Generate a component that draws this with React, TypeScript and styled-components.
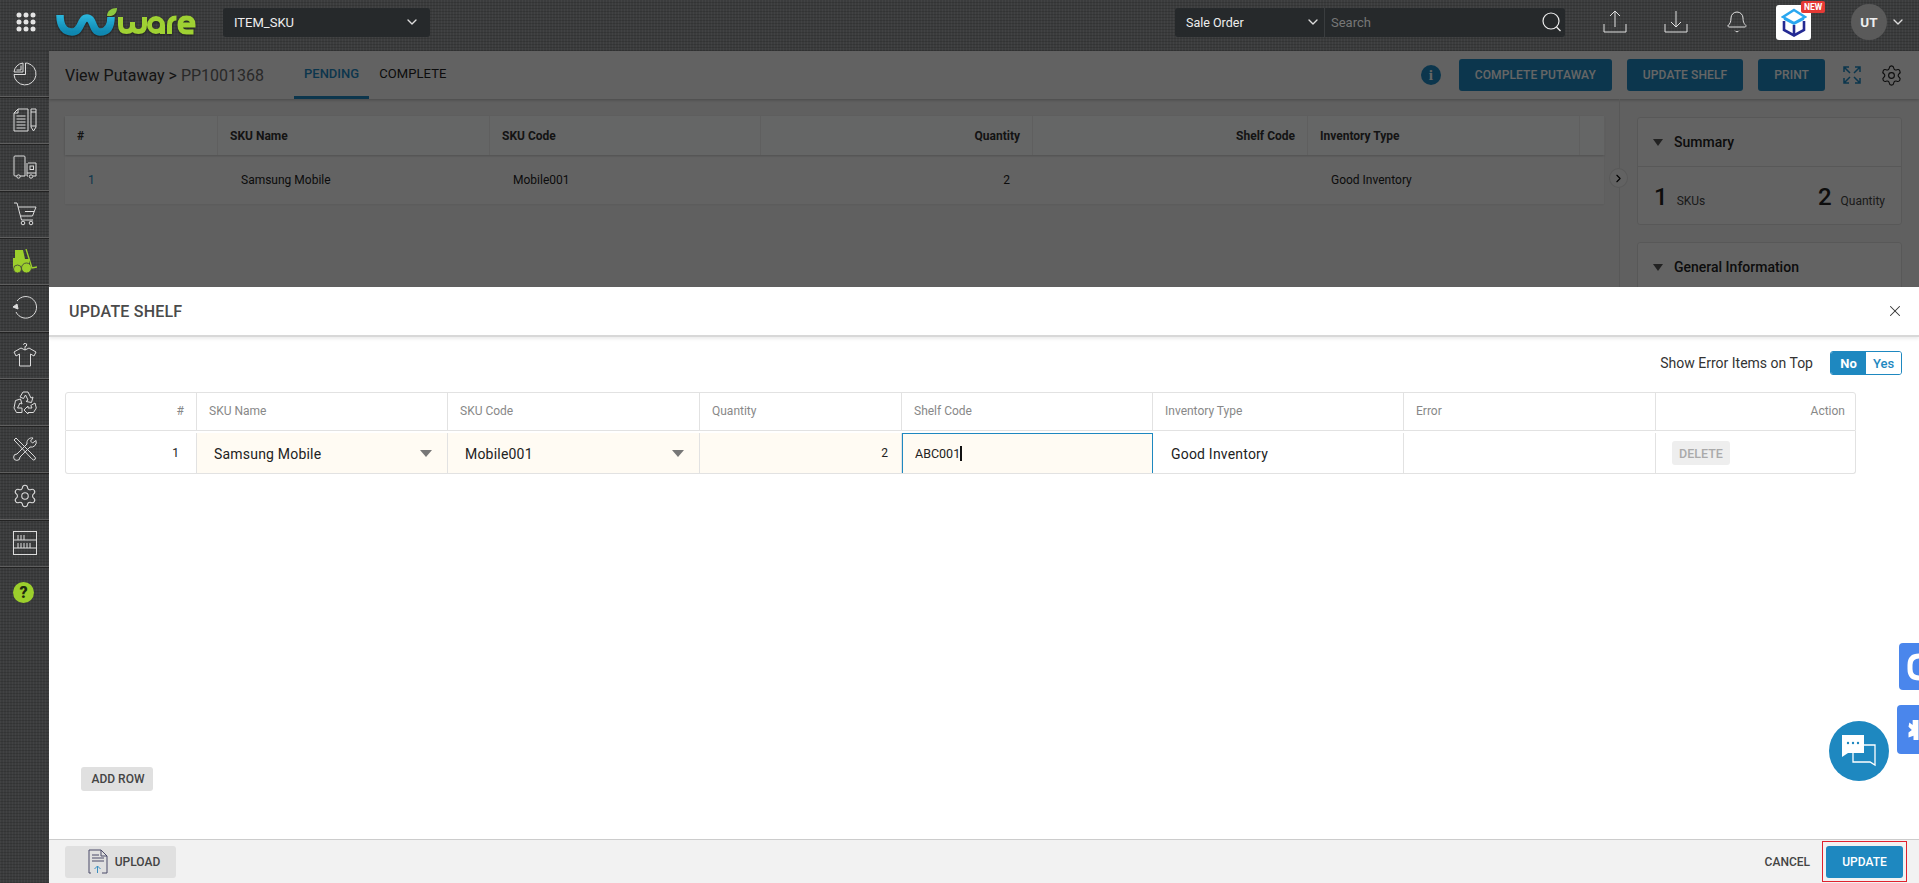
import { ChevronDown, ChevronRight, Bell, Settings, X } from 'lucide-react'
import styled, { createGlobalStyle } from 'styled-components'

const GlobalStyle = createGlobalStyle`
  html, body {
    margin: 0;
    height: 100%;
    overflow: hidden;
    font-family: 'Roboto', 'Liberation Sans', sans-serif;
    color: #222;
  }
  * { box-sizing: border-box; }
`

const fabric = `
  background-color: #3b3c3d;
  background-image:
    repeating-linear-gradient(0deg, rgba(0, 0, 0, 0.14) 0 1px, transparent 1px 3px),
    repeating-linear-gradient(90deg, rgba(255, 255, 255, 0.035) 0 1px, transparent 1px 3px);
`

const Logo = () => (
  <LogoSvg viewBox="0 0 140 28">
    <defs>
      <linearGradient id="logoBlue" x1="0" y1="0" x2="0" y2="1">
        <stop offset="0" stopColor="#2bb6dc" />
        <stop offset="1" stopColor="#0f87b0" />
      </linearGradient>
    </defs>
    <path
      d="M4 7 C4 19 9 24 16 24 C26 24 24 10 31 10 C38 10 36 24 44 24 C52 24 55 18 55 9"
      fill="none"
      stroke="url(#logoBlue)"
      strokeWidth="7.5"
      strokeLinecap="butt"
    />
    <path d="M51 8 C51 3 55 0 61 0 C61 5 58 9 51 8Z" fill="#8dc63f" />
    <g fill="none" stroke="#9fd133" strokeWidth="5" strokeLinecap="butt">
      <path d="M64.5 9 v8 q0 6.5 6 6.5 q6 0 6 -6.5 v-3 v3 q0 6.5 6 6.5 q6 0 6 -6.5 v-8" />
      <circle cx="100" cy="17" r="6.5" />
      <path d="M106.5 17 v9" />
      <path d="M113.5 26 v-9 q0 -7 7 -7" />
      <path d="M124.5 17 h12.5 q0 -7 -6.5 -7 q-6.5 0 -6.5 7 q0 7 6.5 7 h7" />
    </g>
  </LogoSvg>
)

const GridIcon = () => (
  <svg width="20" height="20" viewBox="0 0 20 20" fill="#e4e4e4">
    {[3, 10, 17].map((y) =>
      [3, 10, 17].map((x) => <circle key={`${x}-${y}`} cx={x} cy={y} r="2.5" />)
    )}
  </svg>
)

const PieIcon = () => (
  <NavSvg viewBox="0 0 24 24">
    <path d="M14.5 1.2 A11 11 0 1 1 1 12.5 H12.5 V1 Z" />
    <path d="M10 1 V10 H1 A10 10 0 0 1 10 1Z" />
    <path d="M8 3.5 V8 H3.5" />
  </NavSvg>
)
const DocIcon = () => (
  <NavSvg viewBox="0 0 24 24">
    <path d="M5 1 H15 V23 H1 V5 Z" />
    <path d="M5 1 V5 H1" />
    <path d="M3.5 8 H12.5 M3.5 11 H12.5 M3.5 14 H12.5 M3.5 17 H12.5 M3.5 20 H12.5" />
    <path d="M18 1 H23 V19 L20.5 23 L18 19 Z" />
    <path d="M18 4 H23 M18 18 H23" />
  </NavSvg>
)
const TruckIcon = () => (
  <NavSvg viewBox="0 0 24 24">
    <path d="M4 21 H2 Q1 21 1 20 V2 Q1 1 2 1 H11 Q12 1 12 2 V21 H7" />
    <path d="M15 8 H23 V21 H20 M15 21 H14 V8" />
    <rect x="17" y="11" width="3.5" height="3.5" />
    <path d="M14 18 H23" />
    <circle cx="5.5" cy="21.5" r="1.7" />
    <circle cx="18" cy="21.5" r="1.7" />
  </NavSvg>
)
const CartIcon = () => (
  <NavSvg viewBox="0 0 24 24">
    <path d="M1 1 H4 L8.5 18 H20" />
    <path d="M5 5 H23 L19.5 14 H7.5" />
    <path d="M12 9.5 H21" />
    <circle cx="10" cy="21" r="1.8" />
    <circle cx="18" cy="21" r="1.8" />
  </NavSvg>
)
const ForkliftIcon = () => (
  <svg width="24" height="25" viewBox="0 0 24 25">
    <path d="M2 1 H10 L12 10 H16 V20 H0 V9 H2 Z" fill="#9ccf2c" />
    <path d="M4 3 H8.5 L10 10 H4 Z" fill="#9ccf2c" />
    <circle cx="4.5" cy="20" r="4" fill="#9ccf2c" stroke="#3b3c3d" strokeWidth="0.8" />
    <circle cx="13.5" cy="19" r="5" fill="#9ccf2c" stroke="#3b3c3d" strokeWidth="0.8" />
    <path d="M13 0 L19 19 L24 18" fill="none" stroke="#9ccf2c" strokeWidth="1.3" />
  </svg>
)
const ReturnIcon = () => (
  <NavSvg viewBox="0 0 24 24">
    <path d="M4 5 A10.8 10.8 0 1 1 3 16" />
    <path d="M0 11 L4 8 L5 13 Z" fill="#dcdcdc" />
  </NavSvg>
)
const ShirtIcon = () => (
  <NavSvg viewBox="0 0 24 24">
    <path d="M8 5 L1 9 L3 13 L6.5 11 V23 H17.5 V11 L21 13 L23 9 L16 5 L12 7 Z" />
    <path d="M12 7 V3.5 A1.6 1.6 0 1 0 10.5 1.8" />
  </NavSvg>
)
const RecycleIcon = () => (
  <NavSvg viewBox="0 0 24 24">
    <path d="M7 7 L10 2 H15 L18 8 L20 7 L18.5 12.5 L13 11.5 L15 10 L12.5 5 L10.5 8.5 Z" />
    <path d="M2.5 10.5 L7.5 9 L9 14 L7 13 L4.5 18 H9 V22.5 H3.5 L1 18 Z" />
    <path d="M22 13 L23.3 18 L20.5 22.5 H15 V24 L11 20 L15 16 V18 H19 L17.8 15.5 Z" />
  </NavSvg>
)
const ToolsIcon = () => (
  <NavSvg viewBox="0 0 24 24">
    <path d="M1 3 L3 1 L5 3 L21 19 Q23.5 21 22 22.5 Q20.5 24 18.5 21.5 L3 5 Z" />
    <path d="M14 7 A5 5 0 0 1 20 1 L17.5 4 L19.5 6 L23 3.5 A5 5 0 0 1 17 10 L7 20 A3.2 3.2 0 1 1 4 17 Z" />
  </NavSvg>
)
const ShelfIcon = () => (
  <NavSvg viewBox="0 0 24 24">
    <rect x="0.5" y="0.5" width="23" height="23" />
    <path d="M0.5 9 H23.5 M0.5 17 H23.5" />
    <path d="M5 4 V9 M8 4 V9 M11 4 V9 M5 12 V17 M8 12 V17 M11 12 V17 M14 12 V17 M17 12 V17" />
  </NavSvg>
)

const UploadTrayIcon = () => (
  <TopSvg viewBox="0 0 24 24">
    <path d="M1 14 V22 H23 V14" />
    <path d="M12 1 V17 M7 6 L12 1 L17 6" />
  </TopSvg>
)
const DownloadTrayIcon = () => (
  <TopSvg viewBox="0 0 24 24">
    <path d="M1 14 V22 H23 V14" />
    <path d="M12 1 V17 M7 12 L12 17 L17 12" />
  </TopSvg>
)

const CubeIcon = () => (
  <svg width="26" height="29" viewBox="0 0 26 29">
    <path d="M13 2 L24 9 L13 15 L2 9 Z" fill="none" stroke="#2aa7f0" strokeWidth="2.4" />
    <path d="M3 13 V22 L13 27.5 L23 22 V13" fill="none" stroke="#242a93" strokeWidth="2.6" />
    <path d="M13 17 V27" stroke="#242a93" strokeWidth="2.6" />
    <path d="M3 11 L13 16 L23 11" fill="none" stroke="#2aa7f0" strokeWidth="1.6" />
  </svg>
)

const ExpandIcon = () => (
  <svg width="18" height="18" viewBox="0 0 18 18" fill="none" stroke="#1e88c0" strokeWidth="1.5">
    <path d="M1 6 V1 H6 M1 1 L7 7 M12 1 H17 V6 M17 1 L11 7 M1 12 V17 H6 M1 17 L7 11 M12 17 H17 V12 M17 17 L11 11" />
  </svg>
)

const UploadFileIcon = () => (
  <svg width="20" height="25" viewBox="0 0 20 25" fill="none" stroke="#4b4a68" strokeWidth="1">
    <path d="M3 24 H1 V1 H13 L19 7 V24 H14" />
    <path d="M13 1 V7 H19" />
    <path d="M4 6 H11 M4 9 H16 M4 12 H16" />
    <path d="M9.5 24 V17 M6.5 20 L9.5 17 L12.5 20" stroke="#3a8fc0" />
  </svg>
)

const ChatIcon = () => (
  <svg width="36" height="34" viewBox="0 0 36 34">
    <path d="M12 11 H34 V31 L29 28 H12 Z" fill="none" stroke="#fff" strokeWidth="1.3" />
    <path d="M1 1 H23 V19 H7 L1 23 Z" fill="#fff" />
    <circle cx="7" cy="9" r="1.2" fill="#1e88c0" />
    <circle cx="12" cy="9" r="1.2" fill="#1e88c0" />
    <circle cx="17" cy="9" r="1.2" fill="#1e88c0" />
  </svg>
)

const navItems = [
  <PieIcon key="pie" />,
  <DocIcon key="doc" />,
  <TruckIcon key="truck" />,
  <CartIcon key="cart" />,
  <ForkliftIcon key="forklift" />,
  <ReturnIcon key="return" />,
  <ShirtIcon key="shirt" />,
  <RecycleIcon key="recycle" />,
  <ToolsIcon key="tools" />,
  <Settings key="settings" size={26} strokeWidth={1} color="#dcdcdc" />,
  <ShelfIcon key="shelf" />
]

const pageColumns = '153px 272px 271px 272px 275px 272px 24px'
const modalColumns = '131px 251px 252px 202px 251px 251px 252px 201px'

function App() {
  return (
    <>
      <GlobalStyle />
      <Screen>
        <TopBar>
          <GridButton>
            <GridIcon />
          </GridButton>
          <Logo />
          <FacilitySelect>
            <span>ITEM_SKU</span>
            <ChevronDown size={16} strokeWidth={2} color="#ddd" />
          </FacilitySelect>
          <SearchGroup>
            <SearchType>
              <span>Sale Order</span>
              <ChevronDown size={16} strokeWidth={2} color="#ddd" />
            </SearchType>
            <SearchInput>
              <span>Search</span>
              <svg width="20" height="20" viewBox="0 0 20 20" fill="none" stroke="#eee" strokeWidth="1.2">
                <circle cx="9" cy="9" r="8" />
                <path d="M14.5 15 L18.5 19" />
              </svg>
            </SearchInput>
          </SearchGroup>
          <TopIcon>
            <UploadTrayIcon />
          </TopIcon>
          <TopIcon>
            <DownloadTrayIcon />
          </TopIcon>
          <BellSlot>
            <Bell size={24} strokeWidth={1} color="#e0e0e0" />
          </BellSlot>
          <AppTile>
            <CubeIcon />
            <NewBadge>NEW</NewBadge>
          </AppTile>
          <Avatar>UT</Avatar>
          <ChevronDown size={16} strokeWidth={2} color="#ddd" />
        </TopBar>
        <Body>
          <SideNav>
            {navItems.map((icon) => (
              <NavItem key={icon.key}>{icon}</NavItem>
            ))}
            <HelpItem>
              <HelpBadge>?</HelpBadge>
            </HelpItem>
          </SideNav>
          <Main>
            <PageHeader>
              <Breadcrumb>
                View Putaway &gt; <BreadcrumbId>PP1001368</BreadcrumbId>
              </Breadcrumb>
              <Tabs>
                <Tab $active>PENDING</Tab>
                <Tab>COMPLETE</Tab>
              </Tabs>
              <HeaderActions>
                <InfoDot>i</InfoDot>
                <PrimaryButton>COMPLETE PUTAWAY</PrimaryButton>
                <PrimaryButton>UPDATE SHELF</PrimaryButton>
                <PrimaryButton>PRINT</PrimaryButton>
                <ExpandSlot>
                  <ExpandIcon />
                </ExpandSlot>
                <Settings size={23} strokeWidth={1.2} color="#222" />
              </HeaderActions>
            </PageHeader>
            <PageBody>
              <PageTableArea>
                <PageTable>
                  <PageHeadRow>
                    <PageHeadCell>#</PageHeadCell>
                    <PageHeadCell>SKU Name</PageHeadCell>
                    <PageHeadCell>SKU Code</PageHeadCell>
                    <PageHeadCell $right>Quantity</PageHeadCell>
                    <PageHeadCell $right>Shelf Code</PageHeadCell>
                    <PageHeadCell>Inventory Type</PageHeadCell>
                    <PageHeadCell />
                  </PageHeadRow>
                  <PageRow>
                    <PageCell>
                      <RowLink>1</RowLink>
                    </PageCell>
                    <PageCell>Samsung Mobile</PageCell>
                    <PageCell>Mobile001</PageCell>
                    <PageCell $right>2</PageCell>
                    <PageCell $right />
                    <PageCell>Good Inventory</PageCell>
                    <PageCell />
                  </PageRow>
                </PageTable>
              </PageTableArea>
              <SideHandle>
                <ChevronRight size={13} strokeWidth={2} color="#000" />
              </SideHandle>
              <SidePanel>
                <SummaryCard>
                  <CardTitle>
                    <CardCaret />
                    Summary
                  </CardTitle>
                  <SummaryStats>
                    <Stat>
                      <StatValue>1</StatValue>
                      <StatLabel>SKUs</StatLabel>
                    </Stat>
                    <Stat>
                      <StatValue>2</StatValue>
                      <StatLabel>Quantity</StatLabel>
                    </Stat>
                  </SummaryStats>
                </SummaryCard>
                <InfoCard>
                  <CardTitle>
                    <CardCaret />
                    General Information
                  </CardTitle>
                </InfoCard>
              </SidePanel>
            </PageBody>
            <Backdrop />
            <Modal>
              <ModalHeader>
                <ModalTitle>UPDATE SHELF</ModalTitle>
                <X size={18} strokeWidth={1.4} color="#333" />
              </ModalHeader>
              <ModalBody>
                <ToggleRow>
                  <span>Show Error Items on Top</span>
                  <Toggle>
                    <ToggleOption $on>No</ToggleOption>
                    <ToggleOption>Yes</ToggleOption>
                  </Toggle>
                </ToggleRow>
                <EditTable>
                  <EditHead>
                    <EditHeadCell $right>#</EditHeadCell>
                    <EditHeadCell>SKU Name</EditHeadCell>
                    <EditHeadCell>SKU Code</EditHeadCell>
                    <EditHeadCell>Quantity</EditHeadCell>
                    <EditHeadCell>Shelf Code</EditHeadCell>
                    <EditHeadCell>Inventory Type</EditHeadCell>
                    <EditHeadCell>Error</EditHeadCell>
                    <EditHeadCell $right>Action</EditHeadCell>
                  </EditHead>
                  <EditRow>
                    <IndexCell>1</IndexCell>
                    <SelectCell>
                      Samsung Mobile
                      <SelectCaret />
                    </SelectCell>
                    <SelectCell>
                      Mobile001
                      <SelectCaret />
                    </SelectCell>
                    <QuantityCell>2</QuantityCell>
                    <ShelfInput>
                      ABC001
                      <TextCaret />
                    </ShelfInput>
                    <PlainCell>Good Inventory</PlainCell>
                    <PlainCell />
                    <ActionCell>
                      <DeleteButton>DELETE</DeleteButton>
                    </ActionCell>
                  </EditRow>
                </EditTable>
                <AddRowButton>ADD ROW</AddRowButton>
              </ModalBody>
              <ModalFooter>
                <UploadButton>
                  <UploadFileIcon />
                  UPLOAD
                </UploadButton>
                <FooterActions>
                  <CancelButton>CANCEL</CancelButton>
                  <Highlight>
                    <UpdateButton>UPDATE</UpdateButton>
                  </Highlight>
                </FooterActions>
              </ModalFooter>
            </Modal>
          </Main>
        </Body>
        <FloatTab $top={643} $height={47}>
          <svg width="12" height="30" viewBox="0 0 12 30">
            <path d="M12 4 Q3 4 3 13 V17 Q3 26 12 26" fill="none" stroke="#fff" strokeWidth="5" />
          </svg>
        </FloatTab>
        <FloatTab $top={705} $height={49} $wide>
          <svg width="11" height="20" viewBox="0 0 12 24" fill="#fff">
            <path d="M5 0 H12 V24 H6 V19 L0 21 L0 15 L4 12 L0 8 L1 3 L5 6 Z" />
          </svg>
        </FloatTab>
        <ChatBubble>
          <ChatIcon />
        </ChatBubble>
      </Screen>
    </>
  )
}

const Screen = styled.div`
  position: relative;
  height: 883px;
  overflow: hidden;
  display: flex;
  flex-direction: column;
`

const TopBar = styled.header`
  ${fabric}
  flex: 0 0 51px;
  display: flex;
  align-items: center;
  padding: 0 13px 7px 16px;
  color: #eee;
`

const GridButton = styled.div`
  display: flex;
  margin-right: 20px;
`

const LogoSvg = styled.svg`
  width: 140px;
  height: 28px;
  margin-right: 27px;
  overflow: visible;
  filter: drop-shadow(0 1px 1px rgba(0, 0, 0, 0.5));
`

const FacilitySelect = styled.div`
  width: 207px;
  height: 29px;
  background: #26292b;
  border-radius: 3px;
  display: flex;
  align-items: center;
  justify-content: space-between;
  padding: 0 10px 0 11px;
  font-size: 13px;
`

const SearchGroup = styled.div`
  display: flex;
  height: 29px;
  margin-left: auto;
  margin-right: 38px;
  background: #26292b;
  border-radius: 3px;
`

const SearchType = styled.div`
  width: 150px;
  display: flex;
  align-items: center;
  justify-content: space-between;
  padding: 0 3px 0 11px;
  font-size: 12.5px;
  border-right: 1px solid #3a3d3f;
`

const SearchInput = styled.div`
  width: 240px;
  display: flex;
  align-items: center;
  justify-content: space-between;
  padding: 0 3px 0 6px;
  font-size: 13px;
  color: #777;
`

const TopSvg = styled.svg`
  width: 24px;
  height: 24px;
  fill: none;
  stroke: #e0e0e0;
  stroke-width: 1;
`

const TopIcon = styled.div`
  display: flex;
  width: 24px;
  margin-right: 37px;
`

const BellSlot = styled(TopIcon)`
  margin-right: 27px;
`

const AppTile = styled.div`
  position: relative;
  width: 35px;
  height: 35px;
  margin-right: 40px;
  background: #fff;
  border-radius: 3px;
  display: flex;
  align-items: center;
  justify-content: center;
`

const NewBadge = styled.span`
  position: absolute;
  top: -4px;
  right: -14px;
  width: 24px;
  height: 12px;
  line-height: 12px;
  text-align: center;
  background: #e53935;
  color: #fff;
  font-size: 8.5px;
  font-weight: 700;
  border-radius: 2px;
`

const Avatar = styled.div`
  width: 36px;
  height: 36px;
  border-radius: 50%;
  background: #5a5a5a;
  display: flex;
  align-items: center;
  justify-content: center;
  font-size: 13.5px;
  font-weight: 700;
  margin-right: 3px;
`

const Body = styled.div`
  flex: 1;
  display: flex;
  min-height: 0;
`

const SideNav = styled.nav`
  ${fabric}
  flex: 0 0 49px;
  display: flex;
  flex-direction: column;
`

const NavItem = styled.div`
  flex: 0 0 47px;
  display: flex;
  align-items: center;
  justify-content: center;
  border-bottom: 1px solid #5e5e5e;
  box-shadow: 0 1px 0 #222;
  &:first-child {
    flex-basis: 46px;
  }
`

const HelpItem = styled(NavItem)`
  margin-top: 2px;
  border-bottom: 0;
  box-shadow: none;
`

const NavSvg = styled.svg`
  width: 24px;
  height: 24px;
  fill: none;
  stroke: #dcdcdc;
  stroke-width: 1;
`

const HelpBadge = styled.div`
  width: 21px;
  height: 21px;
  margin-left: -2px;
  border-radius: 50%;
  background: #9ccf2c;
  color: #1f2a10;
  display: flex;
  align-items: center;
  justify-content: center;
  font-size: 16px;
  font-weight: 900;
`

const Main = styled.main`
  position: relative;
  flex: 1;
  min-width: 0;
  background: #f0f0f0;
`

const PageHeader = styled.div`
  height: 48px;
  display: flex;
  align-items: center;
  padding-left: 16px;
  background: #f4f4f4;
  box-shadow: 0 1px 3px rgba(0, 0, 0, 0.25);
`

const Breadcrumb = styled.div`
  width: 229px;
  font-size: 16px;
  color: #333;
`

const BreadcrumbId = styled.span`
  color: #666;
`

const Tabs = styled.div`
  display: flex;
  align-self: stretch;
`

const Tab = styled.div<{ $active?: boolean }>`
  display: flex;
  align-items: center;
  padding: 0 10px;
  font-size: 13px;
  font-weight: ${({ $active }) => ($active ? 500 : 400)};
  letter-spacing: ${({ $active }) => ($active ? 0 : 0.1)}px;
  color: ${({ $active }) => ($active ? '#1e88c0' : '#222')};
  border-bottom: 3px solid ${({ $active }) => ($active ? '#1e88c0' : 'transparent')};
`

const HeaderActions = styled.div`
  margin-left: auto;
  display: flex;
  align-items: center;
  gap: 15px;
  padding-right: 16px;
`

const InfoDot = styled.div`
  width: 20px;
  height: 20px;
  margin-right: 3px;
  border-radius: 50%;
  background: #1e88c0;
  color: #fff;
  display: flex;
  align-items: center;
  justify-content: center;
  font-family: 'Liberation Serif', serif;
  font-size: 15px;
  font-weight: 700;
`

const PrimaryButton = styled.div`
  height: 32px;
  padding: 0 16px;
  background: #1e88c0;
  color: #fff;
  border-radius: 3px;
  display: flex;
  align-items: center;
  font-size: 12px;
  font-weight: 500;
  letter-spacing: 0.1px;
`

const ExpandSlot = styled.div`
  display: flex;
  margin: 0 4px 0 3px;
`

const PageBody = styled.div`
  display: flex;
  height: 300px;
  padding-left: 16px;
`

const PageTableArea = styled.div`
  width: 1555px;
  padding-top: 17px;
  border-right: 1px solid #ddd;
`

const PageTable = styled.div`
  width: 1539px;
  background: #f7f7f7;
  box-shadow: 0 1px 2px rgba(0, 0, 0, 0.06);
`

const PageHeadRow = styled.div`
  display: grid;
  grid-template-columns: ${pageColumns};
  height: 39px;
  background: #fdffff;
  box-shadow: 0 1px 2px rgba(0, 0, 0, 0.2);
`

const PageHeadCell = styled.div<{ $right?: boolean }>`
  display: flex;
  align-items: center;
  justify-content: ${({ $right }) => ($right ? 'flex-end' : 'flex-start')};
  padding: 0 12px 0 12px;
  font-size: 12px;
  font-weight: 700;
  color: #333;
  border-right: 1px solid #eee;
`

const PageRow = styled.div`
  display: grid;
  grid-template-columns: ${pageColumns};
  height: 49px;
`

const PageCell = styled.div<{ $right?: boolean }>`
  display: flex;
  align-items: center;
  justify-content: ${({ $right }) => ($right ? 'flex-end' : 'flex-start')};
  padding: 0 23px;
  font-size: 12px;
  color: #222;
`

const RowLink = styled.span`
  color: #1e88c0;
`

const SideHandle = styled.div`
  position: absolute;
  left: 1560px;
  top: 117px;
  width: 19px;
  height: 20px;
  border-radius: 50%;
  background: #f4f4f4;
  border: 1px solid #ddd;
  display: flex;
  align-items: center;
  justify-content: center;
`

const SidePanel = styled.aside`
  flex: 1;
  padding: 18px 17px 0 17px;
  display: flex;
  flex-direction: column;
  gap: 17px;
`

const SummaryCard = styled.section`
  height: 108px;
  background: #f7f7f7;
  border: 1px solid #ddd;
  border-radius: 3px;
`

const InfoCard = styled(SummaryCard)`
  height: 120px;
`

const CardTitle = styled.div`
  height: 49px;
  display: flex;
  align-items: center;
  gap: 11px;
  padding-left: 15px;
  font-size: 14px;
  font-weight: 500;
  color: #222;
  border-bottom: 1px solid #ddd;
`

const CardCaret = styled.i`
  width: 0;
  height: 0;
  border-left: 5.5px solid transparent;
  border-right: 5.5px solid transparent;
  border-top: 7px solid #555;
`

const SummaryStats = styled.div`
  display: flex;
  justify-content: space-between;
  padding: 16px 16px 0 16px;
`

const Stat = styled.div`
  display: flex;
  align-items: baseline;
  gap: 9px;
`

const StatValue = styled.span`
  font-size: 24px;
  font-weight: 500;
  color: #222;
`

const StatLabel = styled.span`
  font-size: 12px;
  color: #444;
`

const Backdrop = styled.div`
  position: absolute;
  inset: 0;
  background: rgba(0, 0, 0, 0.6);
`

const Modal = styled.div`
  position: absolute;
  left: 0;
  right: 0;
  bottom: 0;
  height: 596px;
  display: flex;
  flex-direction: column;
  background: #fff;
`

const ModalHeader = styled.div`
  flex: 0 0 50px;
  display: flex;
  align-items: center;
  justify-content: space-between;
  padding: 0 15px 0 20px;
  border-bottom: 2px solid #d8d8d8;
  box-shadow: 0 2px 3px rgba(0, 0, 0, 0.08);
`

const ModalTitle = styled.div`
  font-size: 16px;
  font-weight: 500;
  letter-spacing: 0.2px;
  color: #4a4a4a;
`

const ModalBody = styled.div`
  flex: 1;
  display: flex;
  flex-direction: column;
  padding: 14px 17px 0 16px;
`

const ToggleRow = styled.div`
  display: flex;
  justify-content: flex-end;
  align-items: center;
  gap: 17px;
  height: 24px;
  font-size: 14px;
  color: #333;
`

const Toggle = styled.div`
  display: flex;
  width: 72px;
  height: 24px;
  border: 1px solid #1e88c0;
  border-radius: 3px;
  overflow: hidden;
`

const ToggleOption = styled.div<{ $on?: boolean }>`
  flex: 1;
  display: flex;
  align-items: center;
  justify-content: center;
  font-size: 13px;
  font-weight: ${({ $on }) => ($on ? 700 : 500)};
  background: ${({ $on }) => ($on ? '#1e88c0' : '#fff')};
  color: ${({ $on }) => ($on ? '#fff' : '#1e88c0')};
`

const EditTable = styled.div`
  width: 1791px;
  margin-top: 17px;
`

const EditHead = styled.div`
  display: grid;
  grid-template-columns: ${modalColumns};
  height: 39px;
  border: 1px solid #e2e2e2;
  border-radius: 3px 3px 0 0;
`

const EditHeadCell = styled.div<{ $right?: boolean }>`
  display: flex;
  align-items: center;
  justify-content: ${({ $right }) => ($right ? 'flex-end' : 'flex-start')};
  padding: 0 12px 2px;
  font-size: 12px;
  color: #888;
  border-right: 1px solid #e2e2e2;
  &:last-child {
    border-right: 0;
  }
`

const EditRow = styled.div`
  display: grid;
  grid-template-columns: ${modalColumns};
  height: 43px;
  padding-top: 2px;
  border: 1px solid #e2e2e2;
  border-top: 0;
  border-radius: 0 0 3px 3px;
`

const PlainCell = styled.div`
  display: flex;
  align-items: center;
  padding: 1px 18px 0;
  font-size: 14px;
  letter-spacing: 0.2px;
  color: #222;
  border-right: 1px solid #e2e2e2;
`

const IndexCell = styled(PlainCell)`
  justify-content: flex-end;
  padding: 0 17px;
  font-size: 12px;
  letter-spacing: 0;
`

const SelectCell = styled(PlainCell)`
  justify-content: space-between;
  padding: 1px 15px 0 17px;
  background: #fffbf3;
`

const SelectCaret = styled.i`
  width: 0;
  height: 0;
  border-left: 6px solid transparent;
  border-right: 6px solid transparent;
  border-top: 7px solid #777;
`

const QuantityCell = styled(PlainCell)`
  justify-content: flex-end;
  padding: 0 13px;
  font-size: 12px;
  letter-spacing: 0;
  background: #fffbf3;
`

const ShelfInput = styled.div`
  display: flex;
  align-items: center;
  padding: 0 12px;
  font-size: 12.5px;
  color: #222;
  background: #fffbf3;
  border: 1px solid #1e88c0;
  border-bottom: 0;
`

const TextCaret = styled.span`
  width: 1.5px;
  height: 15px;
  background: #111;
`

const ActionCell = styled.div`
  display: flex;
  align-items: center;
  padding: 0 16px;
`

const DeleteButton = styled.div`
  width: 58px;
  height: 24px;
  display: flex;
  align-items: center;
  justify-content: center;
  background: #eee;
  color: #aaa;
  border-radius: 3px;
  font-size: 12.5px;
  font-weight: 500;
`

const AddRowButton = styled.div`
  width: 72px;
  height: 24px;
  margin: auto 0 48px 16px;
  padding-left: 2px;
  display: flex;
  align-items: center;
  justify-content: center;
  background: #e0e0e0;
  color: #444;
  border-radius: 3px;
  font-size: 12px;
  font-weight: 500;
`

const ModalFooter = styled.div`
  flex: 0 0 44px;
  display: flex;
  align-items: center;
  justify-content: space-between;
  padding: 0 12px 0 16px;
  background: #f2f2f2;
  border-top: 1px solid #ccc;
`

const UploadButton = styled.div`
  width: 111px;
  height: 32px;
  padding-left: 7px;
  display: flex;
  align-items: center;
  justify-content: center;
  gap: 7px;
  background: #e0e0e0;
  color: #444;
  border-radius: 3px;
  font-size: 12px;
  font-weight: 500;
`

const FooterActions = styled.div`
  display: flex;
  align-items: center;
  gap: 12px;
`

const CancelButton = styled.div`
  font-size: 12px;
  font-weight: 500;
  color: #444;
`

const Highlight = styled.div`
  padding: 4px 3px 3px;
  border: 1px solid #e0222f;
`

const UpdateButton = styled.div`
  width: 77px;
  height: 32px;
  display: flex;
  align-items: center;
  justify-content: center;
  background: #1e88c0;
  color: #fff;
  border-radius: 3px;
  font-size: 12px;
  font-weight: 500;
`

const FloatTab = styled.div<{ $top: number; $height: number; $wide?: boolean }>`
  position: absolute;
  right: 0;
  top: ${({ $top }) => $top}px;
  width: ${({ $wide }) => ($wide ? 22 : 20)}px;
  height: ${({ $height }) => $height}px;
  background: #4a86ec;
  border-radius: 4px 0 0 4px;
  display: flex;
  align-items: center;
  justify-content: flex-end;
`

const ChatBubble = styled.div`
  position: absolute;
  left: 1829px;
  top: 721px;
  width: 60px;
  height: 60px;
  border-radius: 50%;
  background: #1e88c0;
  display: flex;
  align-items: center;
  justify-content: center;
`

export default App
